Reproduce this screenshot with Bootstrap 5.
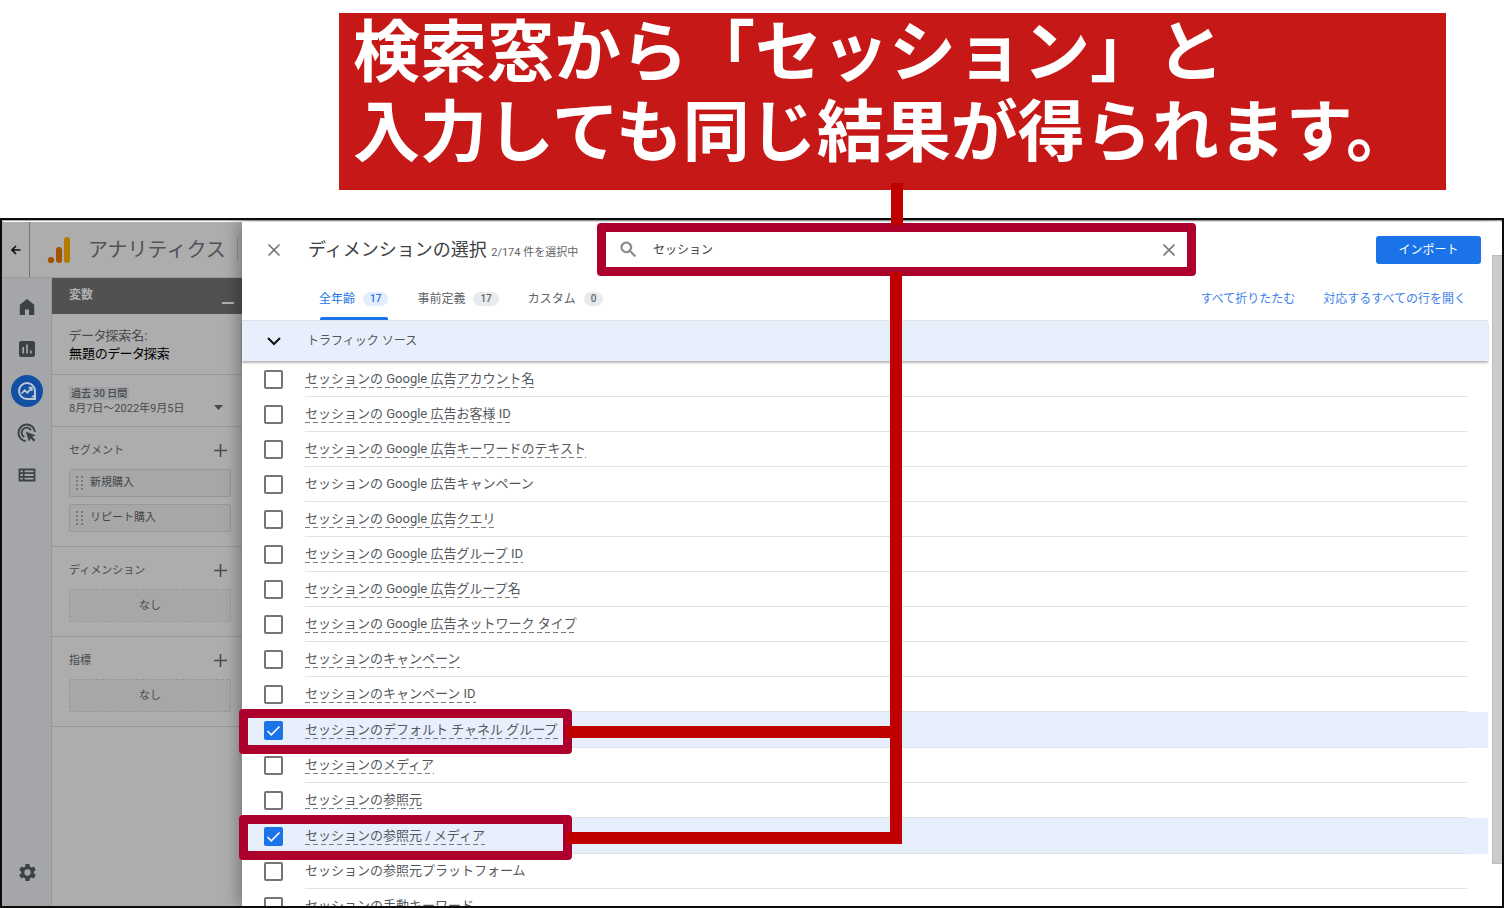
<!DOCTYPE html>
<html lang="ja">
<head>
<meta charset="utf-8">
<meta name="viewport" content="width=device-width, initial-scale=1">
<title>ディメンションの選択</title>
<link href="https://cdn.jsdelivr.net/npm/bootstrap@5.3.0/dist/css/bootstrap.min.css" rel="stylesheet">
<style>
body{font-family:Roboto,"Noto Sans CJK JP",sans-serif;font-size:12px;line-height:18px;color:#54585c;font-weight:400;background:#fff;height:100vh}
svg{display:block}
.banner{position:relative;z-index:5;margin:13px 58px 28px 339px;padding:0 0 29px 14px;gap:12px;background:#c51817;color:#fff;font:700 67px/68px "Noto Sans CJK JP",sans-serif;white-space:nowrap}
.banner::after{content:"";position:absolute;left:552px;top:170px;width:12px;height:42px;background:#c00000}
.frame{min-height:0;border:2px solid #0c0c0c;box-shadow:inset 0 0 0 1px #aaa;overflow:hidden;padding:2px 0 0 1px}
/* dimmed application */
.app{width:239px;background:#adadad;color:#484a4d}
.apphead{height:56px;border-bottom:1px solid #9a9a9a}
.plain{border:0;background:none;padding:0;color:inherit}
.back{width:27px;border-right:1px solid #999;color:#111}
.brand{font-size:20px;line-height:28px;color:#505357}
.rail{width:49px;background:#a4a6a9;border-right:1px solid #989898;color:#3d4146;padding:8px 0 13px}
.railbtn{height:42px;width:100%;display:flex;align-items:center;justify-content:center;border:0;background:none;padding:0;color:inherit}
.active-dot{width:32px;height:32px;border-radius:50%;background:#134fa3;display:flex;align-items:center;justify-content:center;color:#bcc6d6}
.varhead{height:36px;background:#515151;color:#b0b0b0;font-weight:700;padding:0 8px 2px 17px}
.sec{border-bottom:1px solid #989898;padding:0 11px 14px 17px;font-size:11px}
.sec.explore{font-size:13px;font-feature-settings:"palt";padding:13px 0 11px 17px}
.sec.range{height:52px;padding-bottom:8px}
.sechead{height:42px;padding-top:5px}
.chipbtn{height:28px;border:1px solid #979797;border-radius:2px;background:#a7a7a7;color:#44474a;padding:0 0 0 6px;gap:7px;width:100%}
.drop{height:33px;border:1px dashed #979797;border-radius:2px;background:#a7a7a7}
.period{display:block;width:max-content;background:#a0a2a5;font-size:10px;line-height:13px;font-weight:500;padding:0 2px}
/* dialog */
.dlg{position:relative;background:#fff;box-shadow:-4px 0 14px rgba(0,0,0,.3)}
.dlghead{height:56px;padding:0 5px 1px 22px}
.ttl{width:313px;font-size:18px;line-height:26px;color:#3c4043;padding:3px 0 0 24px}
.count{font-size:11px;color:#5f6368}
.search{position:relative;width:599px;height:53px;border:9px solid #ad002d;border-radius:4px;background:#fff;padding:0 12px 0 12px}
.search input{border:0;outline:0;background:none;color:#3c4043;padding:0;margin-left:14px}
.vline{position:absolute;z-index:4;left:284px;top:40px;width:12px;height:572px;background:#c00000}
.import{background:#1a73e8;color:#fff;border:0;border-radius:3px;width:105px;height:28px;font-size:12px;line-height:18px;padding:0}
.import:hover{background:#1765cc;color:#fff}
.tabs{height:43px;padding:0 22px 0 77px;border-bottom:1px solid #e0e2e6}
.tabset{gap:29px}
.tabbtn{height:42px;border:0;background:none;padding:0;color:#5f6368;gap:8px;position:relative}
.tabbtn.on{color:#1a73e8}
.tabbtn.on::after{content:"";position:absolute;left:1px;right:0;bottom:0;height:3px;background:#1a73e8;border-radius:2px 2px 0 0}
.pill{background:#e8eaed;border-radius:8px;font-size:10px;line-height:14px;font-weight:500;padding:0 7px}
.on .pill{background:#e3edfd}
.links{gap:28px}
.lnk{color:#3f7fe8;text-decoration:none}
.grp{height:40px;background:#e8effc;box-shadow:0 2px 2px rgba(0,0,0,.28);padding:0 0 0 25px;gap:26px;position:relative}
.rows{padding-top:1px;font-size:13px}
.item{height:35px;padding:0 21px 0 22px;position:relative}
.item.sel{height:36px;background:#e8effc}
.item .form-check-input{width:19px;height:19px;margin:0;border:2px solid #757575;border-radius:2px;box-shadow:none;flex:none}
.item .form-check-input:checked{background-color:#1a73e8;border-color:#1a73e8;background-size:15px;background-image:url("data:image/svg+xml,%3Csvg xmlns='http://www.w3.org/2000/svg' viewBox='0 0 15 15'%3E%3Cpath fill='none' stroke='white' stroke-width='1.6' d='M1.500 8l3.800 3.800L13.500 3.500'/%3E%3C/svg%3E")}
.item label{flex:1;height:100%;margin-left:22px;display:flex;align-items:center;border-bottom:1px solid #dfe1e5;white-space:nowrap}
.tip{background:repeating-linear-gradient(90deg,#777b80 0 5px,transparent 5px 8px) left bottom/100% 1px no-repeat}
.ring{position:absolute;z-index:3;left:-3px;top:-3px;width:333px;height:45px;border:9px solid #ad002d;border-radius:4px;pointer-events:none}
.ring::after{content:"";position:absolute;left:319px;top:8px;width:335px;height:12px;background:#c00000}
.sb{width:10px;margin:-23px 0 42px 4px;background:#cbcbcb;border:1px solid #bdbdbd;border-right:0;flex:none}
.fill{min-height:0}
</style>
</head>
<body class="d-flex flex-column overflow-hidden">
<header class="banner d-flex flex-column"><div>検索窓から「セッション」と</div><div>入力しても同じ結果が得られます。</div></header>

<div class="frame d-flex flex-grow-1">
  <div class="app d-flex flex-column flex-shrink-0">
    <div class="apphead d-flex align-items-center flex-shrink-0">
      <button class="plain back h-100 d-flex align-items-center justify-content-center border-end border-secondary" aria-label="戻る">
        <svg width="10" height="10" viewBox="0 0 10 10" fill="none" stroke="currentColor" stroke-width="1.700"><path d="M9.600 5H1M5 1 1 5l4 4"/></svg>
      </button>
      <svg class="mx-3" width="26" height="28" viewBox="0 0 26 28"><rect x="18" y="1" width="6" height="26" rx="3" fill="#b37c00"/><rect x="10" y="11" width="6" height="16" rx="3" fill="#a35200"/><circle cx="5" cy="24" r="3.100" fill="#a35200"/></svg>
      <span class="brand text-nowrap flex-grow-1">アナリティクス</span>
      <span class="vr me-1 my-3"></span>
    </div>
    <div class="d-flex flex-grow-1 fill">
      <nav class="rail d-flex flex-column flex-shrink-0">
        <button class="railbtn" aria-label="ホーム"><svg width="16" height="18" viewBox="0 0 16 18" fill="currentColor"><path d="M8 1 0.800 6.800V17H6v-5.600h4V17h5.200V6.800z"/></svg></button>
        <button class="railbtn" aria-label="レポート"><svg width="18" height="18" viewBox="0 0 18 18"><rect x="1" y="1" width="16" height="16" rx="2" fill="currentColor"/><path d="M5.200 7v6.500M9 4.500v9M12.800 10.500v3" stroke="#a4a6a9" stroke-width="1.700"/></svg></button>
        <button class="railbtn" aria-label="探索"><span class="active-dot"><svg width="20" height="20" viewBox="0 0 20 20" fill="none" stroke="currentColor" stroke-width="2"><path d="M18 18V10a8 8 0 1 0-8 8z"/><path d="m4.500 12.500 3.200-3.200 2.600 2.400 4.200-4.400M11.500 6.700h3.300V10" stroke-width="1.700"/><path d="M14 16.500h3v-3z" fill="currentColor" stroke="none"/></svg></span></button>
        <button class="railbtn" aria-label="広告"><svg width="20" height="20" viewBox="0 0 20 20" fill="none" stroke="currentColor" stroke-width="1.900"><path d="M8.800 18.100A8.300 8.300 0 1 1 18 8.800"/><path d="M7.200 14A5 5 0 1 1 14 7.200"/><path d="m8.800 8.800 9.800 3.400-3.500 1.500 3.300 3.400-1.600 1.600-3.300-3.400-1.500 3.500z" fill="currentColor" stroke="none"/></svg></button>
        <button class="railbtn" aria-label="設定一覧"><svg width="18" height="14" viewBox="0 0 18 14" fill="none" stroke="currentColor" stroke-width="1.800"><path d="M1.500 1.500h15v11h-15zM1.500 5.200h15M1.500 8.800h15M5.700 1.500v11"/></svg></button>
        <button class="railbtn mt-auto" aria-label="管理"><svg width="21" height="21" viewBox="0 0 24 24" fill="currentColor"><path d="M19.140 12.940c.04-.3.06-.61.06-.94 0-.32-.02-.64-.07-.94l2.030-1.580a.49.49 0 0 0 .12-.61l-1.920-3.320a.488.488 0 0 0-.59-.22l-2.390.96c-.5-.38-1.030-.7-1.620-.94l-.36-2.540a.484.484 0 0 0-.48-.41h-3.840c-.24 0-.43.17-.47.41l-.36 2.540c-.59.24-1.130.57-1.620.94l-2.390-.96c-.22-.08-.47 0-.59.22L2.740 8.870c-.12.21-.08.47.12.61l2.030 1.580c-.05.3-.09.63-.09.94s.02.64.07.94l-2.030 1.580a.49.49 0 0 0-.12.61l1.920 3.320c.12.22.37.29.59.22l2.390-.96c.5.38 1.030.7 1.620.94l.36 2.540c.05.24.24.41.48.41h3.840c.24 0 .44-.17.47-.41l.36-2.540c.59-.24 1.130-.56 1.620-.94l2.390.96c.22.08.47 0 .59-.22l1.920-3.320c.12-.22.07-.47-.12-.61l-2.010-1.580zM12 15.600A3.600 3.600 0 1 1 12 8.400a3.600 3.600 0 0 1 0 7.200z"/></svg></button>
      </nav>
      <div class="flex-grow-1">
        <div class="varhead d-flex align-items-center justify-content-between"><span>変数</span><button class="plain pt-3" aria-label="最小化"><svg width="12" height="3"><rect width="12" height="2" fill="#b0b0b0"/></svg></button></div>
        <div class="sec explore"><div>データ探索名:</div><div class="text-black">無題のデータ探索</div></div>
        <div class="sec range d-flex align-items-end justify-content-between">
          <div><span class="period">過去 30 日間</span><div class="text-nowrap">8月7日～2022年9月5日</div></div>
          <button class="plain p-1 mb-1 me-1" aria-label="期間"><svg width="9" height="5"><path d="M0 0h9L4.500 5z" fill="currentColor"/></svg></button>
        </div>
        <div class="sec">
          <div class="sechead d-flex align-items-center justify-content-between"><span>セグメント</span><button class="plain px-1" aria-label="追加"><svg width="13" height="13" stroke="currentColor" stroke-width="1.600"><path d="M6.500 0v13M0 6.500h13"/></svg></button></div>
          <div class="d-grid" style="gap:7px">
            <button class="chipbtn d-flex align-items-center"><svg width="7" height="15" stroke="#77797b" stroke-width="2" stroke-dasharray="2 2"><path d="M1 0v15M6 0v15"/></svg>新規購入</button>
            <button class="chipbtn d-flex align-items-center"><svg width="7" height="15" stroke="#77797b" stroke-width="2" stroke-dasharray="2 2"><path d="M1 0v15M6 0v15"/></svg>リピート購入</button>
          </div>
        </div>
        <div class="sec">
          <div class="sechead d-flex align-items-center justify-content-between"><span>ディメンション</span><button class="plain px-1" aria-label="追加"><svg width="13" height="13" stroke="currentColor" stroke-width="1.600"><path d="M6.500 0v13M0 6.500h13"/></svg></button></div>
          <div class="drop d-flex align-items-center justify-content-center">なし</div>
        </div>
        <div class="sec">
          <div class="sechead d-flex align-items-center justify-content-between"><span>指標</span><button class="plain px-1" aria-label="追加"><svg width="13" height="13" stroke="currentColor" stroke-width="1.600"><path d="M6.500 0v13M0 6.500h13"/></svg></button></div>
          <div class="drop d-flex align-items-center justify-content-center">なし</div>
        </div>
      </div>
    </div>
  </div>

  <main class="dlg d-flex flex-column flex-grow-1">
    <div class="dlghead d-flex align-items-center flex-shrink-0 me-3">
      <button class="plain px-1" aria-label="閉じる"><svg width="12" height="12" stroke="#6a6e73" stroke-width="1.500"><path d="m.5.5 11 11M11.500.5l-11 11"/></svg></button>
      <h1 class="ttl mb-0 fw-normal text-nowrap flex-shrink-0">ディメンションの選択 <span class="count">2/174 件を選択中</span></h1>
      <div class="search d-flex align-items-center flex-shrink-0">
        <svg width="21" height="21" viewBox="0 0 24 24" fill="#80868b" stroke="#80868b" stroke-width=".4"><path d="M15.500 14h-.79l-.28-.27A6.471 6.471 0 0 0 16 9.500 6.500 6.500 0 1 0 9.500 16c1.610 0 3.090-.59 4.230-1.570l.27.28v.79l5 4.990L20.490 19l-4.990-5zm-6 0C7.010 14 5 11.990 5 9.500S7.010 5 9.500 5 14 7.010 14 9.500 11.990 14 9.500 14z"/></svg>
        <input class="flex-grow-1" type="text" value="セッション" aria-label="検索">
        <button class="plain" aria-label="消去"><svg width="12" height="12" stroke="#777c80" stroke-width="1.700"><path d="m.5.5 11 11M11.500.5l-11 11"/></svg></button>
        <div class="vline"></div>
      </div>
      <button class="btn import ms-auto">インポート</button>
    </div>
    <div class="d-flex flex-grow-1 fill">
      <div class="flex-grow-1">
        <div class="tabs d-flex align-items-center justify-content-between">
          <div class="tabset d-flex">
            <button class="tabbtn on d-flex align-items-center">全年齢<span class="pill">17</span></button>
            <button class="tabbtn d-flex align-items-center">事前定義<span class="pill">17</span></button>
            <button class="tabbtn d-flex align-items-center">カスタム<span class="pill">0</span></button>
          </div>
          <div class="links d-flex">
            <a class="lnk" href="#">すべて折りたたむ</a>
            <a class="lnk" href="#">対応するすべての行を開く</a>
          </div>
        </div>
        <div class="grp d-flex align-items-center">
          <svg width="14" height="9" fill="none" stroke="#111" stroke-width="2"><path d="m1 1 6 6 6-6"/></svg><span>トラフィック ソース</span>
        </div>
        <div class="rows">
          <div class="item d-flex align-items-center"><input class="form-check-input" type="checkbox" id="c1"><label for="c1"><span class="tip">セッションの Google 広告アカウント名</span></label></div>
          <div class="item d-flex align-items-center"><input class="form-check-input" type="checkbox" id="c2"><label for="c2"><span class="tip">セッションの Google 広告お客様 ID</span></label></div>
          <div class="item d-flex align-items-center"><input class="form-check-input" type="checkbox" id="c3"><label for="c3"><span class="tip">セッションの Google 広告キーワードのテキスト</span></label></div>
          <div class="item d-flex align-items-center"><input class="form-check-input" type="checkbox" id="c4"><label for="c4"><span>セッションの Google 広告キャンペーン</span></label></div>
          <div class="item d-flex align-items-center"><input class="form-check-input" type="checkbox" id="c5"><label for="c5"><span class="tip">セッションの Google 広告クエリ</span></label></div>
          <div class="item d-flex align-items-center"><input class="form-check-input" type="checkbox" id="c6"><label for="c6"><span class="tip">セッションの Google 広告グループ ID</span></label></div>
          <div class="item d-flex align-items-center"><input class="form-check-input" type="checkbox" id="c7"><label for="c7"><span class="tip">セッションの Google 広告グループ名</span></label></div>
          <div class="item d-flex align-items-center"><input class="form-check-input" type="checkbox" id="c8"><label for="c8"><span class="tip">セッションの Google 広告ネットワーク タイプ</span></label></div>
          <div class="item d-flex align-items-center"><input class="form-check-input" type="checkbox" id="c9"><label for="c9"><span class="tip">セッションのキャンペーン</span></label></div>
          <div class="item d-flex align-items-center"><input class="form-check-input" type="checkbox" id="c10"><label for="c10"><span class="tip">セッションのキャンペーン ID</span></label></div>
          <div class="item sel d-flex align-items-center"><input class="form-check-input" type="checkbox" id="c11" checked><label for="c11"><span class="tip">セッションのデフォルト チャネル グループ</span></label><div class="ring"></div></div>
          <div class="item d-flex align-items-center"><input class="form-check-input" type="checkbox" id="c12"><label for="c12"><span class="tip">セッションのメディア</span></label></div>
          <div class="item d-flex align-items-center"><input class="form-check-input" type="checkbox" id="c13"><label for="c13"><span class="tip">セッションの参照元</span></label></div>
          <div class="item sel d-flex align-items-center"><input class="form-check-input" type="checkbox" id="c14" checked><label for="c14"><span class="tip">セッションの参照元 / メディア</span></label><div class="ring"></div></div>
          <div class="item d-flex align-items-center"><input class="form-check-input" type="checkbox" id="c15"><label for="c15"><span>セッションの参照元プラットフォーム</span></label></div>
          <div class="item d-flex align-items-center"><input class="form-check-input" type="checkbox" id="c16"><label for="c16"><span class="tip">セッションの手動キーワード</span></label></div>
        </div>
      </div>
      <div class="sb"></div>
    </div>
  </main>
</div>
<script src="https://cdn.jsdelivr.net/npm/bootstrap@5.3.0/dist/js/bootstrap.bundle.min.js"></script>
</body>
</html>
